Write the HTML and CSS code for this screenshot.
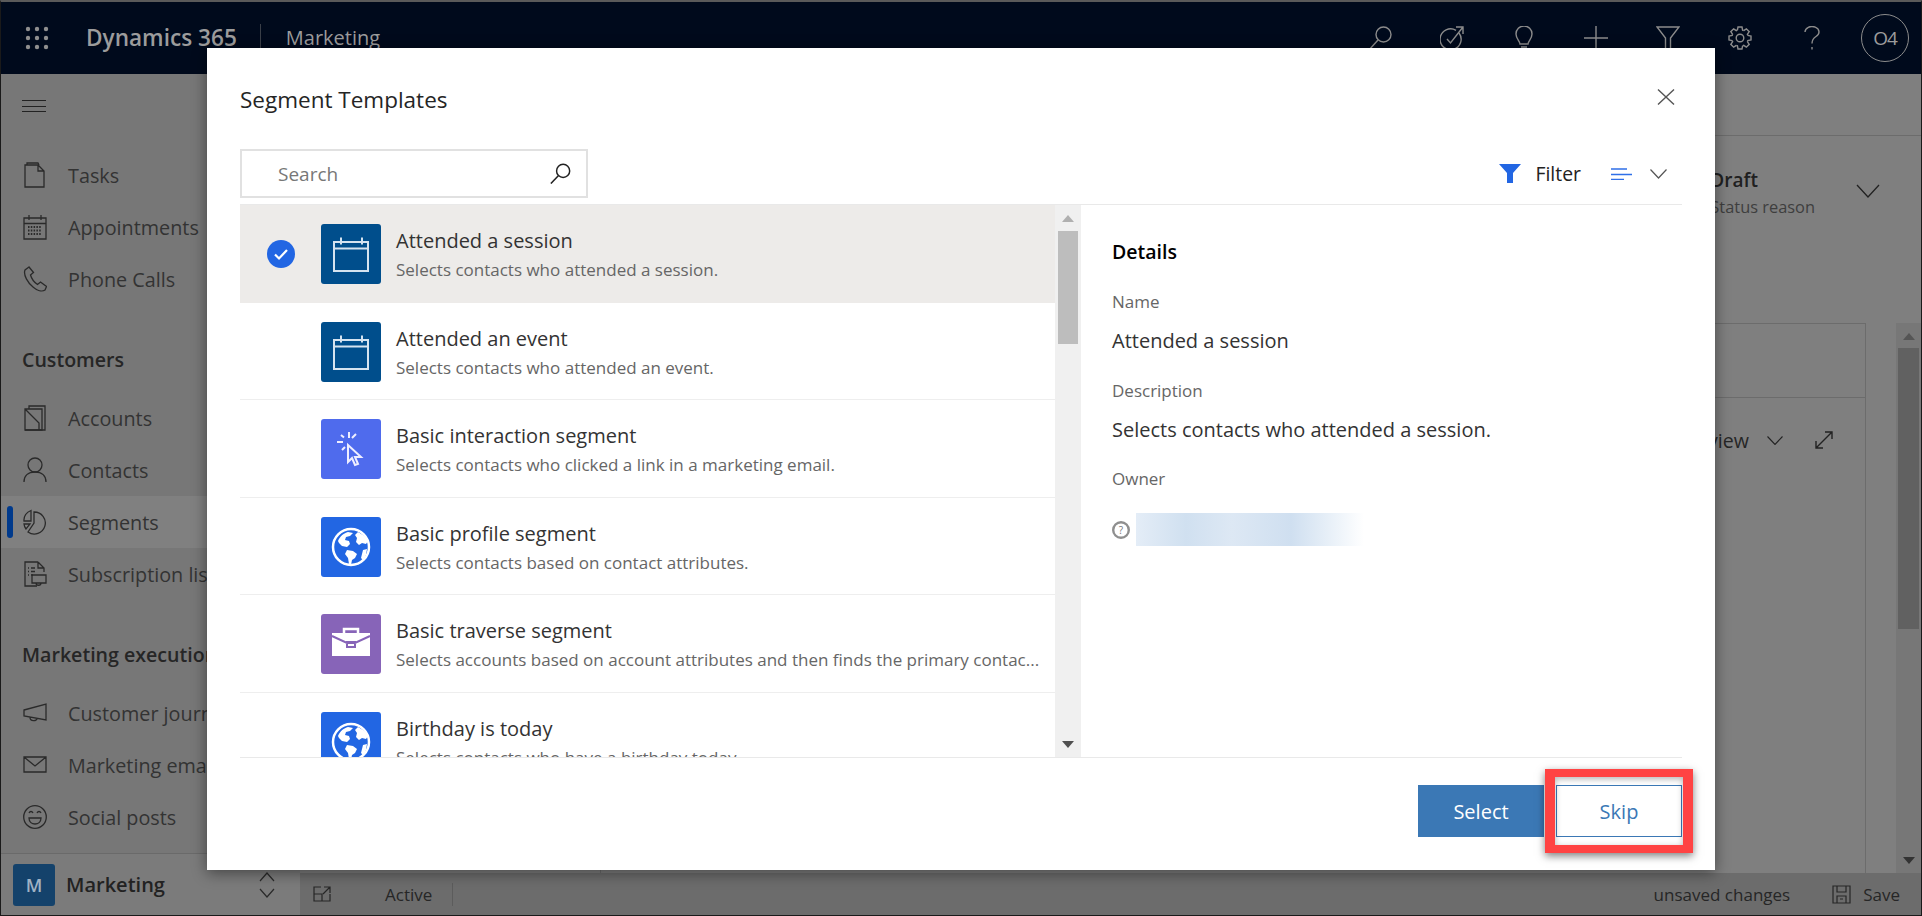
FILE: index.html
```html
<!DOCTYPE html>
<html lang="en">
<head>
  <meta charset="UTF-8">
  <meta name="viewport" content="width=device-width, initial-scale=1.0">
  <title>Segment Templates</title>
  <link rel="stylesheet" href="styles.css">
</head>
<body>
  <svg class="defs" width="0" height="0">
    <defs>
      <symbol id="ico-calendar" viewBox="0 0 60 60">
        <path d="M13 18h34v29H13zM13 24.500h34M20 13.500v7M41 13.500v7" fill="none" stroke="#d5e3f0" stroke-width="2"/>
      </symbol>
      <symbol id="ico-globe" viewBox="0 0 60 60">
        <circle cx="30" cy="30" r="18" fill="#2266e3" stroke="#fff" stroke-width="2.500"/>
        <path d="M17 24c2-5 6-8 10-9l5 1-3 3-4 1-1 3 4 1 1 3-3 3-5-1-3-3-1-2zM37 15c4 2 8 5 10 9l-2 3-4-1-3 2-3-3 1-4-2-3zM26 33l6 1 4 3-2 4-3 2-1 5-2-1-1-6-3-4zM42 33l4-1-1 6-3 5-2-2 1-4z" fill="#fff"/>
      </symbol>
      <g id="gear-tooth">
        <path d="M9.400 4.200 10 1h4l.6 3.200 1.080.45" fill="none" stroke="currentColor" stroke-width="1.400"/>
      </g>
    </defs>
  </svg>

  <div class="app">
    <header class="topbar">
      <svg class="waffle" width="24" height="24" viewBox="0 0 24 24" fill="#8f8f8f">
        <circle cx="3" cy="3" r="2.200"/><circle cx="12" cy="3" r="2.200"/><circle cx="21" cy="3" r="2.200"/>
        <circle cx="3" cy="12" r="2.200"/><circle cx="12" cy="12" r="2.200"/><circle cx="21" cy="12" r="2.200"/>
        <circle cx="3" cy="21" r="2.200"/><circle cx="12" cy="21" r="2.200"/><circle cx="21" cy="21" r="2.200"/>
      </svg>
      <span class="brand">Dynamics 365</span>
      <span class="app-name">Marketing</span>
      <div class="top-actions">
        <span class="top-btn"><svg width="24" height="24" viewBox="0 0 24 24"><circle cx="15.500" cy="8.500" r="7.500"/><path d="M10 14 1 24"/></svg></span>
        <span class="top-btn"><svg width="24" height="24" viewBox="0 0 24 24"><path d="M19 7a10.500 10.500 0 1 1-3-2.700"/><path d="m7 13 3.500 4L23 1M16 1h7v7"/></svg></span>
        <span class="top-btn"><svg width="20" height="24" viewBox="0 0 20 24"><path d="M6 18c0-3-4-5-4-10a8 8 0 0 1 16 0c0 5-4 7-4 10zM7 21h6M8 23.500h4"/></svg></span>
        <span class="top-btn"><svg width="26" height="26" viewBox="0 0 26 26"><path d="M13 1v24M1 13h24"/></svg></span>
        <span class="top-btn"><svg width="24" height="24" viewBox="0 0 24 24"><path d="M1 1h22l-8.500 11v11h-5V12z"/></svg></span>
        <span class="top-btn gear">
          <svg width="24" height="24" viewBox="0 0 24 24">
            <circle cx="12" cy="12" r="3.800"/>
            <use href="#gear-tooth"/>
            <use href="#gear-tooth" transform="rotate(45 12 12)"/>
            <use href="#gear-tooth" transform="rotate(90 12 12)"/>
            <use href="#gear-tooth" transform="rotate(135 12 12)"/>
            <use href="#gear-tooth" transform="rotate(180 12 12)"/>
            <use href="#gear-tooth" transform="rotate(225 12 12)"/>
            <use href="#gear-tooth" transform="rotate(270 12 12)"/>
            <use href="#gear-tooth" transform="rotate(315 12 12)"/>
          </svg>
        </span>
        <span class="top-btn"><svg width="16" height="24" viewBox="0 0 16 24"><path d="M1 6a7 5.500 0 1 1 11 4.500c-3 2-4 3.500-4 7M8 21v2.500"/></svg></span>
        <span class="avatar">O4</span>
      </div>
    </header>

    <div class="workspace">
      <aside class="sidebar">
        <div class="hamburger"><i></i><i></i><i></i></div>
        <nav class="nav">
          <a class="nav-item">
            <svg width="24" height="26" viewBox="0 0 24 26"><path d="M4 3V1h11l1 2M2 3h13l6 6v16H2zM15 3v6h6"/></svg>
            <span>Tasks</span>
          </a>
          <a class="nav-item">
            <svg width="24" height="26" viewBox="0 0 24 26"><path d="M1 4h22v21H1zM1 9.500h22M6 1v5M18 1v5"/><path d="M5 13h14M5 16.500h14M5 20h14" stroke-dasharray="1.500 1.300" stroke-width="2"/></svg>
            <span>Appointments</span>
          </a>
          <a class="nav-item">
            <svg width="24" height="26" viewBox="0 0 24 26"><path d="M6 1 2 4c-2 5 3 13 8 17 4 3.500 9 5 12 3l1.500-3.500-6-4.500-3 2.500c-3-2-6-6-7-9.500l3-2.500z"/></svg>
            <span>Phone Calls</span>
          </a>

          <h3 class="nav-group">Customers</h3>
          <a class="nav-item">
            <svg width="24" height="26" viewBox="0 0 24 26"><path d="M6 4V1h16v20M2 4h17v21H2zM2 4l14 14v7"/><path d="M2 25h20v-4"/></svg>
            <span>Accounts</span>
          </a>
          <a class="nav-item">
            <svg width="24" height="26" viewBox="0 0 24 26"><circle cx="12" cy="8" r="7"/><path d="M1 25c0-6 4-10 11-10s11 4 11 10"/></svg>
            <span>Contacts</span>
          </a>
          <a class="nav-item active">
            <svg width="24" height="26" viewBox="0 0 24 26"><path d="M11 3a11 11 0 1 1-6 20l6-9zM8 1.500A10 10 0 0 0 1 12h7zM1 15h6l-4 5a10 10 0 0 1-2-5z"/></svg>
            <span>Segments</span>
          </a>
          <a class="nav-item">
            <svg width="24" height="26" viewBox="0 0 24 26"><path d="M15 1H2v24h12M15 1l6 6v4M15 1v6h6M5 7h1M8 7h4M5 10.500h1M8 10.500h4M5 14h1M8 14h2"/><path d="M9 14h14v8H9zM13 22c0 3 5 3 5 0"/></svg>
            <span>Subscription lists</span>
          </a>

          <h3 class="nav-group">Marketing execution</h3>
          <a class="nav-item">
            <svg width="24" height="20" viewBox="0 0 24 20"><path d="M1 7 23 1v16L1 13zM7 14.500c0 4 7 4 7 1"/></svg>
            <span>Customer journeys</span>
          </a>
          <a class="nav-item">
            <svg width="24" height="18" viewBox="0 0 24 18"><path d="M1 1h22v15H1zM1 1l11 9 11-9"/></svg>
            <span>Marketing emails</span>
          </a>
          <a class="nav-item">
            <svg width="24" height="26" viewBox="0 0 24 26"><circle cx="12" cy="13" r="11.300"/><path d="M6 14h12c0 8-12 8-12 0zM6 9c1-2 3-2 4 0M14 9c1-2 3-2 4 0"/></svg>
            <span>Social posts</span>
          </a>
        </nav>
        <div class="area-switch">
          <span class="area-tile">M</span>
          <span class="area-name">Marketing</span>
          <svg class="area-arrows" width="16" height="26" viewBox="0 0 16 26"><path d="m1 9 7-8 7 8M1 17l7 8 7-8"/></svg>
        </div>
      </aside>

      <main class="main">
        <div class="cmd-bar"></div>
        <div class="form-head">
          <div class="status-block">
            <strong>Draft</strong>
            <span>Status reason</span>
          </div>
          <svg class="status-chevron" width="24" height="14" viewBox="0 0 24 14"><path d="m1 1 11 12L23 1"/></svg>
        </div>
        <div class="form-body">
          <section class="panel">
            <div class="panel-top"></div>
            <div class="panel-row">
              <span>Preview</span>
              <svg width="16" height="9" viewBox="0 0 16 9"><path d="m.5.500 7.500 8 7.500-8"/></svg>
              <svg class="expand" width="18" height="18" viewBox="0 0 18 18"><path d="M1 17 17 1M10 1h7v7M1 10v7h7"/></svg>
            </div>
          </section>
          <div class="page-scroll">
            <span class="arrow-up dark"></span>
            <div class="page-thumb"></div>
            <span class="arrow-down dark"></span>
          </div>
        </div>
        <footer class="status-bar">
          <svg class="open-icon" width="18" height="16" viewBox="0 0 18 16"><path d="M8 1H1v14h16V8M1 8h8v7M11 1h6v6M17 1l-7 7"/></svg>
          <span class="state">Active</span>
          <span class="unsaved">unsaved changes</span>
          <svg class="save-icon" width="19" height="19" viewBox="0 0 19 19"><path d="M1 1h17v17H1zM5 1v6h9V1M5 18v-7h9v7M8 14h3"/></svg>
          <span class="save">Save</span>
        </footer>
      </main>
    </div>
  </div>

  <div class="dialog">
    <div class="dialog-head">
      <h2>Segment Templates</h2>
      <svg class="close" width="18" height="16" viewBox="0 0 18 16"><path d="m1 .500 16 15M17 .500l-16 15"/></svg>
    </div>

    <div class="toolbar">
      <div class="search">
        <span>Search</span>
        <svg width="21" height="21" viewBox="0 0 24 24"><circle cx="15" cy="9" r="7.500"/><path d="M9.500 14.500 1 23.500"/></svg>
      </div>
      <div class="tools">
        <svg class="filter-icon" width="22" height="19" viewBox="0 0 22 19"><path d="M0 0h22l-8 9v10H8V9z"/></svg>
        <span class="filter-label">Filter</span>
        <svg class="sort-icon" width="21" height="12" viewBox="0 0 21 12"><path d="M0 1h16M0 6.500h21M0 11.500h13"/></svg>
        <svg class="tool-chevron" width="17" height="10" viewBox="0 0 17 10"><path d="m.5.500 8 8.500 8-8.500"/></svg>
      </div>
    </div>

    <div class="dialog-body">
      <div class="list">
        <div class="row selected">
          <span class="check">
            <svg width="28" height="28" viewBox="0 0 28 28"><circle cx="14" cy="14" r="14" fill="#2266e3"/><path d="m8 14.500 4 4 8-8.500" fill="none" stroke="#fff" stroke-width="2.200"/></svg>
          </span>
          <svg class="tile navy"><use href="#ico-calendar"/></svg>
          <div class="row-text">
            <div class="row-title">Attended a session</div>
            <div class="row-desc">Selects contacts who attended a session.</div>
          </div>
        </div>
        <div class="row">
          <span class="check"></span>
          <svg class="tile navy"><use href="#ico-calendar"/></svg>
          <div class="row-text">
            <div class="row-title">Attended an event</div>
            <div class="row-desc">Selects contacts who attended an event.</div>
          </div>
        </div>
        <div class="row">
          <span class="check"></span>
          <svg class="tile indigo" viewBox="0 0 60 60">
            <path d="M28 13v6M31 19l4-4M20 16l3 2.500M16 23h6M21 31l3-3" stroke="#eef" stroke-width="2" fill="none"/>
            <path d="M27 26v17l4-4 3 7 3-1-3-7h6l-13-12z" fill="none" stroke="#eef" stroke-width="2"/>
          </svg>
          <div class="row-text">
            <div class="row-title">Basic interaction segment</div>
            <div class="row-desc">Selects contacts who clicked a link in a marketing email.</div>
          </div>
        </div>
        <div class="row">
          <span class="check"></span>
          <svg class="tile blue"><use href="#ico-globe"/></svg>
          <div class="row-text">
            <div class="row-title">Basic profile segment</div>
            <div class="row-desc">Selects contacts based on contact attributes.</div>
          </div>
        </div>
        <div class="row">
          <span class="check"></span>
          <svg class="tile purple" viewBox="0 0 60 60">
            <path d="M23 19v-4h14v4" fill="none" stroke="#fff" stroke-width="2.500"/>
            <path d="M11 19h38v23H11z" fill="#fff"/>
            <path d="m11 22 15 7h8l15-7M26 28h8v5h-8z" fill="none" stroke="#8764b8" stroke-width="2"/>
          </svg>
          <div class="row-text">
            <div class="row-title">Basic traverse segment</div>
            <div class="row-desc">Selects accounts based on account attributes and then finds the primary contac...</div>
          </div>
        </div>
        <div class="row">
          <span class="check"></span>
          <svg class="tile blue"><use href="#ico-globe"/></svg>
          <div class="row-text">
            <div class="row-title">Birthday is today</div>
            <div class="row-desc">Selects contacts who have a birthday today.</div>
          </div>
        </div>
      </div>

      <div class="list-scroll">
        <span class="arrow-up"></span>
        <div class="list-thumb"></div>
        <span class="arrow-down"></span>
      </div>

      <div class="details">
        <h4>Details</h4>
        <div class="label">Name</div>
        <div class="value">Attended a session</div>
        <div class="label">Description</div>
        <div class="value">Selects contacts who attended a session.</div>
        <div class="label">Owner</div>
        <div class="owner">
          <svg width="18" height="18" viewBox="0 0 18 18"><circle cx="9" cy="9" r="7.800" fill="#fff" stroke="#8f8f8f" stroke-width="2.400"/><text x="9" y="12.500" text-anchor="middle" class="owner-mark">?</text></svg>
          <div class="owner-blur"></div>
        </div>
      </div>
    </div>

    <div class="dialog-foot">
      <button class="btn primary">Select</button>
      <button class="btn ghost">Skip</button>
    </div>

    <div class="callout"></div>
  </div>
</body>
</html>
```

FILE: styles.css
```css
* {
  box-sizing: border-box;
}

html, body {
  margin: 0;
  width: 1922px;
  height: 916px;
  overflow: hidden;
}

body {
  position: relative;
  font-family: "Open Sans", "Noto Sans", sans-serif;
  background-color: #7f7f7f;
  color: #333;
}

.defs {
  position: absolute;
}

svg {
  flex: none;
}

.app {
  display: flex;
  flex-direction: column;
  height: 916px;
  border: 1px solid #1a1a1a;
  border-top: 2px solid #5a5a5a;
}

/* top bar */
.topbar {
  display: flex;
  align-items: center;
  flex: none;
  height: 72px;
  padding-left: 24px;
  background-color: #000a1c;
  color: #9c9c9c;
}

.brand {
  margin-left: 37px;
  padding-right: 23px;
  border-right: 1px solid #3a3f48;
  font-size: 22.6px;
  font-weight: 600;
  line-height: 28px;
}

.app-name {
  margin-left: 25px;
  font-size: 20px;
  line-height: 28px;
}

.top-actions {
  display: flex;
  align-items: center;
  margin-left: auto;
  padding-right: 12px;
}

.top-btn {
  display: flex;
  align-items: center;
  justify-content: center;
  width: 72px;
  height: 72px;
  color: #8c8c8c;
}

.top-btn svg {
  fill: none;
  stroke: #8c8c8c;
  stroke-width: 1.4;
}

.avatar {
  display: flex;
  align-items: center;
  justify-content: center;
  width: 48px;
  height: 48px;
  margin-left: 13px;
  border: 1px solid #8c8c8c;
  border-radius: 50%;
  font-size: 19px;
  letter-spacing: -1px;
  color: #9c9c9c;
}

.workspace {
  display: flex;
  flex: 1;
  min-height: 0;
}

/* sidebar */
.sidebar {
  display: flex;
  flex-direction: column;
  flex: none;
  width: 299px;
  background-color: #777;
}

.hamburger {
  display: flex;
  flex-direction: column;
  gap: 4.5px;
  flex: none;
  height: 75px;
  padding: 26px 0 0 21px;
}

.hamburger i {
  display: block;
  width: 24px;
  height: 1px;
  background-color: #222;
}

.nav {
  flex: 1;
}

.nav-item {
  display: flex;
  align-items: center;
  height: 52px;
  padding-left: 22px;
  font-size: 19.8px;
  color: #333;
  white-space: nowrap;
}

.nav-item svg {
  margin-right: 21px;
  fill: none;
  stroke: #2a2a2a;
  stroke-width: 1.3;
}

.nav-item.active {
  position: relative;
  background-color: #808080;
}

.nav-item.active::before {
  content: "";
  position: absolute;
  left: 6px;
  top: 10px;
  width: 6px;
  height: 32px;
  border-radius: 3px;
  background-color: #003a8c;
}

.nav-group {
  height: 87px;
  margin: 0;
  padding: 42px 0 0 21px;
  font-size: 19.6px;
  font-weight: 600;
  line-height: 26px;
  color: #262626;
  white-space: nowrap;
}

.area-switch {
  display: flex;
  align-items: center;
  flex: none;
  height: 62px;
  padding-left: 12px;
  border-top: 1px solid #6a6a6a;
  background-color: #7b7b7b;
}

.area-tile {
  display: flex;
  align-items: center;
  justify-content: center;
  width: 42px;
  height: 42px;
  border-radius: 3px;
  background-color: #14426b;
  color: #9fb2c4;
  font-size: 18px;
  font-weight: 600;
}

.area-name {
  margin-left: 11px;
  font-size: 20px;
  font-weight: 600;
  color: #222;
}

.area-arrows {
  margin-left: auto;
  margin-right: 25px;
  fill: none;
  stroke: #2a2a2a;
  stroke-width: 1.2;
}

/* page behind the dialog */
.main {
  display: flex;
  flex-direction: column;
  flex: 1;
  min-width: 0;
  background-color: #7f7f7f;
}

.cmd-bar {
  flex: none;
  height: 62px;
  border-bottom: 1px solid #6c6c6c;
}

.form-head {
  display: flex;
  justify-content: flex-end;
  flex: none;
  height: 187px;
  padding: 30px 41px 0 0;
}

.status-block {
  display: flex;
  flex-direction: column;
  margin-right: 41px;
}

.status-block strong {
  font-size: 19px;
  font-weight: 600;
  line-height: 28px;
  color: #202020;
}

.status-block span {
  font-size: 16.4px;
  line-height: 26px;
  color: #3e3e3e;
}

.status-chevron {
  margin-top: 18px;
  fill: none;
  stroke: #222;
  stroke-width: 1.3;
}

.form-body {
  display: flex;
  flex: 1;
  min-height: 0;
}

.panel {
  flex: 1;
  margin-left: 300px;
  border: 1px solid #6c6c6c;
  border-bottom: 0;
}

.panel-top {
  height: 74px;
  border-bottom: 1px solid #6c6c6c;
}

.panel-row {
  display: flex;
  align-items: center;
  justify-content: flex-end;
  height: 84px;
  padding-right: 32px;
  font-size: 19.6px;
  color: #262626;
}

.panel-row svg {
  margin-left: 18px;
  fill: none;
  stroke: #222;
  stroke-width: 1.1;
}

.panel-row .expand {
  margin-left: 32px;
  stroke-width: 1.4;
}

.page-scroll {
  position: relative;
  flex: none;
  width: 25px;
  margin-left: 30px;
  background-color: #777;
}

.page-thumb {
  position: absolute;
  top: 25px;
  left: 2px;
  width: 21px;
  height: 281px;
  background-color: #616161;
}

.status-bar {
  display: flex;
  align-items: center;
  flex: none;
  height: 42px;
  padding: 0 21px 0 13px;
  background-color: #6c6c6c;
  font-size: 17px;
  color: #262626;
}

.open-icon, .save-icon {
  fill: none;
  stroke: #262626;
  stroke-width: 1.2;
}

.state {
  margin-left: 54px;
  padding-right: 20px;
  border-right: 1px solid #5c5c5c;
}

.unsaved {
  margin-left: auto;
  margin-right: 42px;
}

.save {
  margin-left: 12px;
}

/* dialog */
.dialog {
  position: absolute;
  left: 207px;
  top: 48px;
  display: flex;
  flex-direction: column;
  width: 1508px;
  height: 822px;
  padding: 0 33px;
  background-color: #fff;
  box-shadow: 0 3px 14px rgba(0, 0, 0, 0.45);
}

.dialog-head {
  display: flex;
  justify-content: space-between;
  flex: none;
  height: 101px;
}

.dialog-head h2 {
  margin: 34px 0 0;
  font-size: 22.5px;
  font-weight: 400;
  line-height: 36px;
  color: #252525;
}

.close {
  margin: 41px 7px 0 0;
  fill: none;
  stroke: #555;
  stroke-width: 1.4;
}

.toolbar {
  display: flex;
  justify-content: space-between;
  flex: none;
  height: 56px;
  border-bottom: 1px solid #e9e9e9;
}

.search {
  display: flex;
  align-items: center;
  justify-content: space-between;
  width: 348px;
  height: 49px;
  padding: 0 15px 0 36px;
  border: 2px solid #e1e1e1;
  font-size: 19px;
  color: #777;
}

.search svg {
  fill: none;
  stroke: #222;
  stroke-width: 1.7;
}

.tools {
  display: flex;
  align-items: center;
  height: 49px;
  padding-right: 15px;
}

.filter-icon {
  fill: #2266e3;
}

.filter-label {
  margin-left: 14px;
  font-size: 19.4px;
  color: #222;
}

.sort-icon {
  margin-left: 30px;
  fill: none;
  stroke: #2f6fe8;
  stroke-width: 1.6;
}

.tool-chevron {
  margin-left: 18px;
  fill: none;
  stroke: #555;
  stroke-width: 1.2;
}

.dialog-body {
  display: flex;
  flex: none;
  height: 552px;
}

.list {
  flex: none;
  width: 815px;
  height: 552px;
  overflow: hidden;
}

.row {
  display: flex;
  align-items: flex-start;
  height: 97.6px;
  padding: 19px 0 0 27px;
  border-bottom: 1px solid #eee;
}

.row.selected {
  background-color: #edebe9;
  border-bottom-color: #edebe9;
}

.check {
  flex: none;
  width: 28px;
  height: 28px;
  margin: 16px 26px 0 0;
}

.tile {
  flex: none;
  width: 60px;
  height: 60px;
  border-radius: 3px;
}

.navy {
  background-color: #004e8c;
}

.indigo {
  background-color: #4f6bed;
}

.blue {
  background-color: #2266e3;
}

.purple {
  background-color: #8764b8;
}

.row-text {
  margin: 3px 0 0 15px;
  white-space: nowrap;
}

.row-title {
  font-size: 20px;
  line-height: 28px;
  color: #333;
}

.row-desc {
  font-size: 17px;
  line-height: 30px;
  color: #666;
}

.list-scroll {
  position: relative;
  flex: none;
  width: 26px;
  background-color: #f0f0f0;
}

.list-thumb {
  position: absolute;
  top: 26px;
  left: 3px;
  width: 20px;
  height: 113px;
  background-color: #bdbdbd;
}

.arrow-up, .arrow-down {
  position: absolute;
  left: 7px;
  width: 0;
  height: 0;
  border-left: 6px solid transparent;
  border-right: 6px solid transparent;
}

.arrow-up {
  top: 10px;
  border-bottom: 7px solid #b0b0b0;
}

.arrow-down {
  bottom: 9px;
  border-top: 7px solid #505050;
}

.dark.arrow-up {
  border-bottom-color: #555;
}

.dark.arrow-down {
  border-top-color: #333;
}

.details {
  flex: 1;
  padding: 33px 0 0 31px;
}

.details h4 {
  margin: 0 0 22px;
  font-size: 19.5px;
  font-weight: 600;
  line-height: 28px;
  color: #000;
}

.label {
  font-size: 17px;
  line-height: 28px;
  color: #666;
}

.value {
  margin: 11px 0 21.5px;
  font-size: 20px;
  line-height: 28px;
  color: #333;
}

.owner {
  display: flex;
  align-items: center;
  gap: 6px;
  margin-top: 20px;
}

.owner-mark {
  font-size: 10px;
  fill: #777;
}

.owner-blur {
  width: 228px;
  height: 33px;
  background: linear-gradient(90deg, #e4edf7, #d0e0f0 22%, #dde8f4 42%, #cfdff0 68%, #e8f0f8 85%, #fff 100%);
}

.dialog-foot {
  display: flex;
  justify-content: flex-end;
  gap: 12px;
  flex: none;
  padding-top: 27px;
  border-top: 1px solid #e9e9e9;
}

.btn {
  width: 126px;
  height: 52px;
  padding: 0;
  border: 1px solid #3b78b5;
  font-family: inherit;
  font-size: 20px;
  cursor: pointer;
}

.primary {
  background-color: #3b78b5;
  color: #fff;
}

.ghost {
  background-color: #fff;
  color: #3b78b5;
}

.callout {
  position: absolute;
  left: 1338px;
  top: 721px;
  width: 148px;
  height: 84px;
  border-style: solid;
  border-color: #ff4343;
  border-width: 8px 10px;
  box-shadow: 0 3px 8px rgba(0, 0, 0, 0.5), inset 0 2px 6px rgba(0, 0, 0, 0.3);
}
```
